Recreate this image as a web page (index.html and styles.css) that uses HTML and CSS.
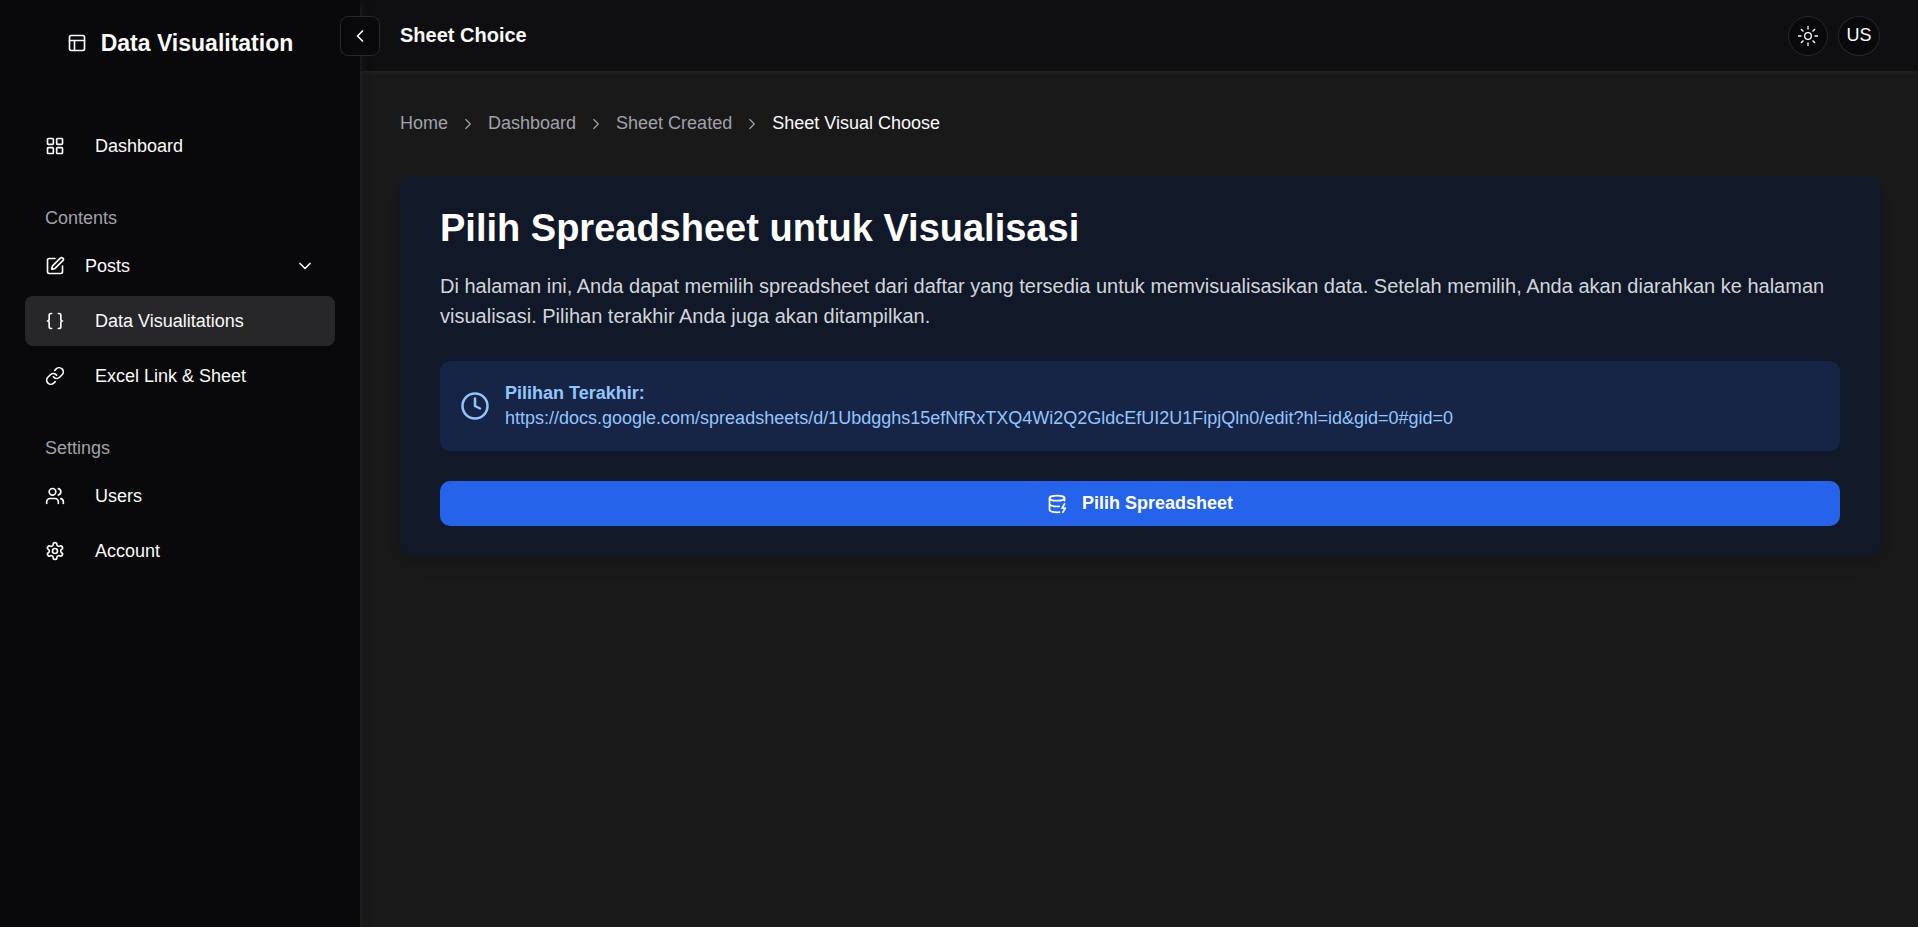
FILE: index.html
```html
<!DOCTYPE html>
<html lang="id">
<head>
<meta charset="utf-8">
<title>Sheet Choice</title>
<link rel="stylesheet" href="styles.css">
</head>
<body>
<div class="app">
  <aside class="sidebar">
    <button class="collapse" type="button" aria-label="Toggle sidebar"><svg class="icon" viewBox="0 0 24 24"><path d="m15 18-6-6 6-6"/></svg></button>
    <a class="brand" href="#"><svg class="icon" viewBox="0 0 24 24"><rect x="3" y="3" width="18" height="18" rx="2"/><path d="M3 9h18M9 21V9"/></svg><span>Data Visualitation</span></a>
    <nav class="nav">
      <a class="item" href="#"><svg class="icon" viewBox="0 0 24 24"><rect x="3" y="3" width="7" height="7" rx="1"/><rect x="14" y="3" width="7" height="7" rx="1"/><rect x="14" y="14" width="7" height="7" rx="1"/><rect x="3" y="14" width="7" height="7" rx="1"/></svg>Dashboard</a>
      <p class="group">Contents</p>
      <button class="item item-toggle" type="button"><svg class="icon" viewBox="0 0 24 24"><path d="M12 3H5a2 2 0 0 0-2 2v14a2 2 0 0 0 2 2h14a2 2 0 0 0 2-2v-7"/><path d="M18.375 2.625a1 1 0 0 1 3 3l-9.013 9.014a2 2 0 0 1-.853.505l-2.873.84a.5.5 0 0 1-.62-.62l.84-2.873a2 2 0 0 1 .506-.852z"/></svg>Posts<svg class="icon chevron" viewBox="0 0 24 24"><path d="m6 9 6 6 6-6"/></svg></button>
      <a class="item active" href="#"><svg class="icon" viewBox="0 0 24 24"><path d="M8 3H7a2 2 0 0 0-2 2v5a2 2 0 0 1-2 2 2 2 0 0 1 2 2v5c0 1.1.9 2 2 2h1"/><path d="M16 21h1a2 2 0 0 0 2-2v-5c0-1.1.9-2 2-2a2 2 0 0 1-2-2V5a2 2 0 0 0-2-2h-1"/></svg>Data Visualitations</a>
      <a class="item" href="#"><svg class="icon" viewBox="0 0 24 24"><path d="M10 13a5 5 0 0 0 7.54.54l3-3a5 5 0 0 0-7.07-7.07l-1.72 1.71"/><path d="M14 11a5 5 0 0 0-7.54-.54l-3 3a5 5 0 0 0 7.07 7.07l1.71-1.71"/></svg>Excel Link &amp; Sheet</a>
      <p class="group">Settings</p>
      <a class="item" href="#"><svg class="icon" viewBox="0 0 24 24"><path d="M16 21v-2a4 4 0 0 0-4-4H6a4 4 0 0 0-4 4v2"/><circle cx="9" cy="7" r="4"/><path d="M22 21v-2a4 4 0 0 0-3-3.87M16 3.13a4 4 0 0 1 0 7.75"/></svg>Users</a>
      <a class="item" href="#"><svg class="icon" viewBox="0 0 24 24"><path d="M12.22 2h-.44a2 2 0 0 0-2 2v.18a2 2 0 0 1-1 1.73l-.43.25a2 2 0 0 1-2 0l-.15-.08a2 2 0 0 0-2.73.73l-.22.38a2 2 0 0 0 .73 2.73l.15.1a2 2 0 0 1 1 1.72v.51a2 2 0 0 1-1 1.74l-.15.09a2 2 0 0 0-.73 2.73l.22.38a2 2 0 0 0 2.73.73l.15-.08a2 2 0 0 1 2 0l.43.25a2 2 0 0 1 1 1.73V20a2 2 0 0 0 2 2h.44a2 2 0 0 0 2-2v-.18a2 2 0 0 1 1-1.73l.43-.25a2 2 0 0 1 2 0l.15.08a2 2 0 0 0 2.73-.73l.22-.39a2 2 0 0 0-.73-2.73l-.15-.08a2 2 0 0 1-1-1.74v-.5a2 2 0 0 1 1-1.74l.15-.09a2 2 0 0 0 .73-2.73l-.22-.38a2 2 0 0 0-2.73-.73l-.15.08a2 2 0 0 1-2 0l-.43-.25a2 2 0 0 1-1-1.73V4a2 2 0 0 0-2-2z"/><circle cx="12" cy="12" r="3"/></svg>Account</a>
    </nav>
  </aside>
  <div class="page">
    <header class="topbar">
      <h1 class="topbar-title">Sheet Choice</h1>
      <button class="round" type="button" aria-label="Toggle theme"><svg class="icon sun" viewBox="0 0 15 15"><circle cx="7.5" cy="7.5" r="2.5"/><path d="M7.5 0v2.6M7.5 12.4V15M0 7.5h2.6M12.4 7.5H15M2.2 2.2l1.9 1.9M10.9 10.9l1.9 1.9M2.2 12.8l1.9-1.9M10.9 4.1l1.9-1.9"/></svg></button>
      <button class="round avatar" type="button">US</button>
    </header>
    <main class="content">
      <nav class="crumbs" aria-label="Breadcrumb">
        <a href="#">Home</a>
        <svg class="icon crumb-sep" viewBox="0 0 24 24"><path d="m9 18 6-6-6-6"/></svg>
        <a href="#">Dashboard</a>
        <svg class="icon crumb-sep" viewBox="0 0 24 24"><path d="m9 18 6-6-6-6"/></svg>
        <a href="#">Sheet Created</a>
        <svg class="icon crumb-sep" viewBox="0 0 24 24"><path d="m9 18 6-6-6-6"/></svg>
        <span class="current" aria-current="page">Sheet Visual Choose</span>
      </nav>
      <section class="card">
        <h2 class="card-title">Pilih Spreadsheet untuk Visualisasi</h2>
        <p class="lead">Di halaman ini, Anda dapat memilih spreadsheet dari daftar yang tersedia untuk memvisualisasikan data. Setelah memilih, Anda akan diarahkan ke halaman visualisasi. Pilihan terakhir Anda juga akan ditampilkan.</p>
        <div class="last">
          <svg class="icon clock" viewBox="0 0 24 24"><circle cx="12" cy="12" r="10"/><path d="M12 6v6l4 2"/></svg>
          <div>
            <p class="last-label">Pilihan Terakhir:</p>
            <p class="last-url">https://docs.google.com/spreadsheets/d/1Ubdgghs15efNfRxTXQ4Wi2Q2GldcEfUI2U1FipjQln0/edit?hl=id&amp;gid=0#gid=0</p>
          </div>
        </div>
        <button class="primary" type="button"><svg class="icon" viewBox="0 0 24 24"><ellipse cx="12" cy="5" rx="9" ry="3"/><path d="M3 5v14a9 3 0 0 0 12 2.84M21 5v3M21 12l-3 5h4l-3 5M3 12a9 3 0 0 0 11.59 2.87"/></svg>Pilih Spreadsheet</button>
      </section>
    </main>
  </div>
</div>
</body>
</html>
```
FILE: styles.css
```css
* { box-sizing: border-box; margin: 0; }

body {
  background: #19191a;
  color: #fafafa;
  font: 18px/25px "Liberation Sans", Arial, sans-serif;
}

a { color: inherit; text-decoration: none; }
button { font: inherit; color: inherit; cursor: pointer; }

.icon {
  width: 20px;
  height: 20px;
  flex: none;
  fill: none;
  stroke: currentColor;
  stroke-width: 2;
  stroke-linecap: round;
  stroke-linejoin: round;
}

.app { display: flex; min-height: 100vh; }

.sidebar {
  position: relative;
  z-index: 2;
  flex: none;
  width: 360px;
  padding: 20px 25px;
  background: #09090b;
  box-shadow: 0 5px 8px -1px #27272a, 0 2px 5px -2px #27272a;
}

.collapse {
  position: absolute;
  top: 16px;
  right: -20px;
  display: grid;
  place-items: center;
  width: 40px;
  height: 40px;
  padding: 0;
  background: #09090b;
  border: 1px solid #27272a;
  border-radius: 8px;
}

.brand {
  display: flex;
  align-items: center;
  justify-content: center;
  gap: 14px;
  height: 46px;
  font-size: 23px;
  font-weight: 700;
}

.nav {
  display: flex;
  flex-direction: column;
  gap: 5px;
  margin-top: 55px;
}

.item {
  display: flex;
  align-items: center;
  gap: 30px;
  width: 100%;
  height: 50px;
  padding: 0 20px;
  background: none;
  border: 0;
  border-radius: 8px;
}

.item-toggle { gap: 20px; }
.item.active { background: #27272a; }
.chevron { margin-left: auto; }

.group {
  padding: 30px 20px 5px;
  color: #a1a1aa;
}

.page { flex: 1; min-width: 0; }

.topbar {
  display: flex;
  align-items: center;
  gap: 10px;
  height: 71px;
  padding: 0 38px 0 40px;
  background: #0f0f11;
  box-shadow: 0 1px 4px #27272a;
}

.topbar-title {
  flex: 1;
  font-size: 20px;
}

.round {
  display: grid;
  place-items: center;
  width: 40px;
  height: 40px;
  padding: 0;
  background: #09090b;
  border: 1px solid #27272a;
  border-radius: 50%;
}

.avatar { width: 42px; }

.sun {
  stroke-width: 1;
  stroke-linecap: butt;
}

.content { padding: 40px 38px 40px 40px; }

.crumbs {
  display: flex;
  align-items: center;
  gap: 11px;
  color: #a1a1aa;
}

.crumb-sep {
  width: 18px;
  height: 18px;
  stroke-width: 1.6;
}

.current { color: #fafafa; }

.card {
  margin-top: 40px;
  padding: 30px 40px;
  background: #111827;
  border-radius: 10px;
  box-shadow: 0 12px 18px -4px rgba(0, 0, 0, 0.1), 0 5px 8px -5px rgba(0, 0, 0, 0.1);
}

.card-title {
  color: #fff;
  font-size: 38px;
  line-height: 45px;
}

.lead {
  margin-top: 20px;
  color: #d1d5db;
  font-size: 20px;
  line-height: 30px;
}

.last {
  display: flex;
  align-items: center;
  gap: 15px;
  margin-top: 30px;
  padding: 20px;
  color: #93c5fd;
  background: #162445;
  border-radius: 10px;
}

.clock { width: 30px; height: 30px; }
.last-label { font-weight: 700; }
.last-url { overflow-wrap: anywhere; }

.primary {
  display: flex;
  align-items: center;
  justify-content: center;
  gap: 15px;
  width: 100%;
  height: 45px;
  margin-top: 30px;
  background: #2563eb;
  border: 0;
  border-radius: 10px;
  color: #fff;
  font-weight: 700;
}
```
